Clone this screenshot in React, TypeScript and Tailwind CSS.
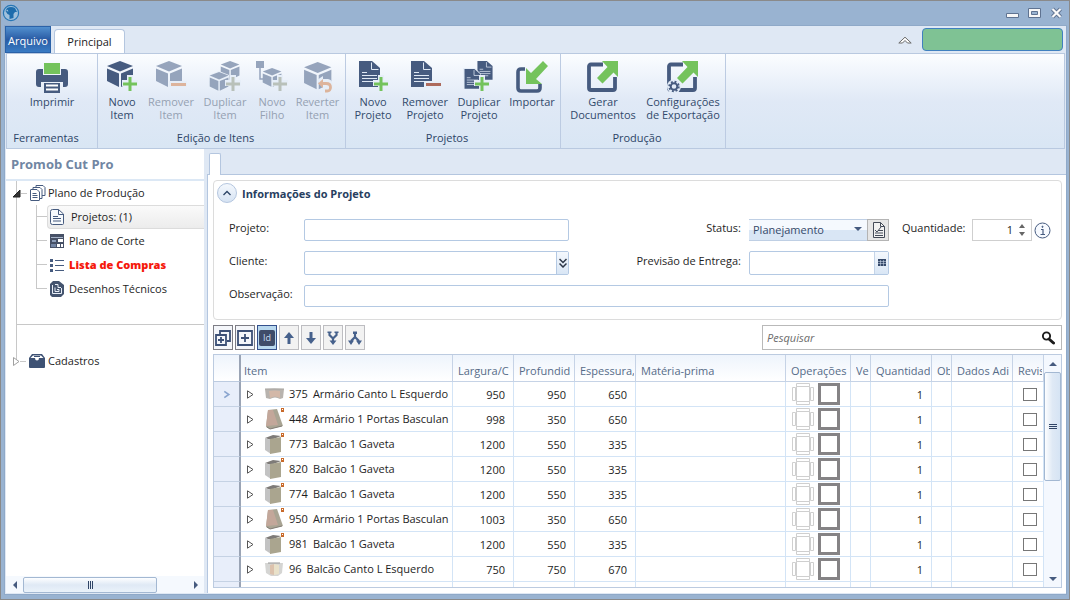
import React from "react";

type IconProps = { className?: string };

const items = [
  { id: "375", name: "Armário Canto L Esquerdo", kind: "wall", w: 950, d: 950, t: 650 },
  { id: "448", name: "Armário 1 Portas Basculan", kind: "tilt", w: 998, d: 350, t: 650 },
  { id: "773", name: "Balcão 1 Gaveta", kind: "box", w: 1200, d: 550, t: 335 },
  { id: "820", name: "Balcão 1 Gaveta", kind: "box", w: 1200, d: 550, t: 335 },
  { id: "774", name: "Balcão 1 Gaveta", kind: "box", w: 1200, d: 550, t: 335 },
  { id: "950", name: "Armário 1 Portas Basculan", kind: "tilt", w: 1003, d: 350, t: 650 },
  { id: "981", name: "Balcão 1 Gaveta", kind: "box", w: 1200, d: 550, t: 335 },
  { id: "96", name: "Balcão Canto L Esquerdo", kind: "corner", w: 750, d: 750, t: 670 },
];

/* ---------- shapes shared by the ribbon icons ---------- */

function Cube({ color = "#465b7f" }: { color?: string }) {
  return (
    <g fill={color}>
      <path d="M14 0 27 5 14 10.500 1 5z" />
      <path d="M1 7.500 13 12.500V26L1 20z" />
      <path d="M15 12.500 27 7.500V20L15 26z" />
    </g>
  );
}

function Plus({ color = "#74c35c" }: { color?: string }) {
  return (
    <g>
      <path d="M21 14h6v5h5v6h-5v6h-6v-6h-5v-6h5z" fill="#e6eef8" />
      <path d="M22.500 16h3v5.500H31v3h-5.500V30h-3v-5.500H17v-3h5.500z" fill={color} />
    </g>
  );
}

function Doc() {
  return (
    <g>
      <path d="M2 0h13l8 7v19H2z" fill="#465b7f" />
      <path d="M14.500 1.500V8.500h7M5 11.500h5M5 14.500h15M5 17.500h15M5 20.500h12" stroke="#dfe8f4" fill="none" />
    </g>
  );
}

function Ribbon32({ children, faded }: { children: React.ReactNode; faded?: boolean }) {
  return (
    <svg viewBox="0 0 32 32" className={faded ? "h-8 w-8 opacity-90" : "h-8 w-8"} aria-hidden="true">
      {children}
    </svg>
  );
}

const PrintIcon = () => (
  <Ribbon32>
    <path d="M8 2h16v11H8z" fill="#74c35c" />
    <path d="M3 8h4v6h18V8h4q3 0 3 3v12q0 3-3 3h-2v-5H5v5H3q-3 0-3-3V11q0-3 3-3z" fill="#465b7f" />
    <path d="M8 22h16v10H8z" fill="#465b7f" />
    <path d="M10 24.500h12M10 28.500h12" stroke="#fff" strokeWidth="1.800" />
  </Ribbon32>
);

const NewItemIcon = () => (
  <Ribbon32>
    <Cube />
    <Plus />
  </Ribbon32>
);

const RemoveItemIcon = () => (
  <Ribbon32 faded>
    <Cube color="#8c9cb6" />
    <path d="M14 20h18v6H14z" fill="#e6eef8" />
    <path d="M16 22h15v3H16z" fill="#dcae92" />
  </Ribbon32>
);

const DuplicateItemIcon = () => (
  <Ribbon32 faded>
    <g transform="translate(11 0) scale(.72)">
      <Cube color="#8c9cb6" />
    </g>
    <g transform="translate(0 11)">
      <path d="M0 3 10-1 20 3V15L10 20 0 15z" fill="#e9f0f9" />
      <g transform="scale(.72)">
        <Cube color="#8c9cb6" />
      </g>
    </g>
    <Plus color="#b4bcb4" />
  </Ribbon32>
);

const NewChildIcon = () => (
  <Ribbon32 faded>
    <path d="M0 0h8v7H0z" fill="#8c9cb6" />
    <path d="M4 7v11h5" stroke="#8c9cb6" strokeWidth="1.500" fill="none" />
    <g transform="translate(6 7) scale(.72)">
      <Cube color="#8c9cb6" />
    </g>
    <Plus color="#b4bcb4" />
  </Ribbon32>
);

const RevertIcon = () => (
  <Ribbon32 faded>
    <g transform="translate(1 1) scale(1.050)">
      <Cube color="#8c9cb6" />
    </g>
    <path d="M15 19l6-4v3h5q5 1 5 7t-5 7h-4v-5h-1z" fill="#e6eef8" />
    <path d="M19 22.500h5q4.500 0 4.500 3.800T25 30h-2" stroke="#dcae92" strokeWidth="2.800" fill="none" />
    <path d="M16 22.500l5-4.500v9z" fill="#dcae92" />
  </Ribbon32>
);

const NewProjectIcon = () => (
  <Ribbon32>
    <Doc />
    <Plus />
  </Ribbon32>
);

const RemoveProjectIcon = () => (
  <Ribbon32>
    <Doc />
    <path d="M15 20h17v7H15z" fill="#e6eef8" />
    <path d="M17 22h15v3H17z" fill="#ad6a5c" />
  </Ribbon32>
);

const DuplicateProjectIcon = () => (
  <Ribbon32>
    <g transform="translate(13 0) scale(.72)">
      <Doc />
    </g>
    <g transform="translate(0 8)">
      <path d="M0-1h12l6 6v16H0z" fill="#e6eef8" />
      <g transform="scale(.76)">
        <Doc />
      </g>
    </g>
    <g transform="translate(-5 0)">
      <Plus />
    </g>
  </Ribbon32>
);

const ImportIcon = () => (
  <Ribbon32>
    <path d="M9 8H5q-3 0-3 3v16q0 3 3 3h16q3 0 3-3v-4" stroke="#465b7f" strokeWidth="3.600" fill="none" />
    <path d="M27 0l5 5-12 13 6 5H10V7l5 5z" fill="#74c35c" />
  </Ribbon32>
);

function ExportShape() {
  return (
    <g>
      <path d="M16 3.500H4q-2 0-2 2V27q0 2 2 2h22q2 0 2-2V16" stroke="#465b7f" strokeWidth="3.800" fill="none" />
      <path d="M15 0h16v16l-4.500-4.500-11 11L10 17l10.500-11z" fill="#74c35c" />
    </g>
  );
}

const GenerateIcon = () => (
  <Ribbon32>
    <ExportShape />
  </Ribbon32>
);

const ExportConfigIcon = () => (
  <Ribbon32>
    <ExportShape />
    <circle cx="7" cy="25.500" r="7" fill="#e3ecf7" />
    <circle cx="7" cy="25.500" r="3.300" stroke="#465b7f" strokeWidth="2" fill="none" />
    <circle cx="7" cy="25.500" r="4.800" stroke="#465b7f" strokeWidth="1.800" strokeDasharray="1.900 1.870" fill="none" />
  </Ribbon32>
);

/* ---------- small icons ---------- */

const AppLogo = () => (
  <svg viewBox="0 0 18 18" className="h-[18px] w-[18px]" aria-hidden="true">
    <circle cx="9" cy="9" r="7.600" fill="#9fc0dc" stroke="#2676b5" strokeWidth="1.200" />
    <path d="M5 4q4-2 8 0l2 4-2 0-1.500 2v4l-4 1 0-4-2-1-2-3z" fill="#1d6cac" />
    <path d="M4 7l1.500-1.500 1 2z" fill="#9fc0dc" />
  </svg>
);

const StackIcon = () => (
  <svg viewBox="0 0 16 16" className="h-4 w-4" fill="#fff" stroke="#465b7f" aria-hidden="true">
    <path d="M6 .500h7l2 2v8H6z" />
    <path d="M3 2.500h7l2 2v9H3z" />
    <path d="M.500 5q0-.500.500-.500h6l2.500 2.500v8q0 .500-.500.500H1q-.500 0-.500-.500z" />
    <path d="M2.500 8.500h4M2.500 10.500h5M2.500 12.500h5" />
  </svg>
);

const PageIcon = ({ className = "h-4 w-4" }: IconProps) => (
  <svg viewBox="0 0 16 16" className={className} fill="none" stroke="#465b7f" aria-hidden="true">
    <path d="M3.500.500h6l5 4.500v9.500q0 1-1 1h-10q-2 0-2-2v-11q0-2 2-2z" fill="#f7fafd" />
    <path d="M9.500.500V5.500h5M4 7.500h5M4 9.500h8M4 12h8" />
  </svg>
);

const CutIcon = () => (
  <svg viewBox="0 0 16 16" className="h-4 w-4" aria-hidden="true">
    <path d="M1 1h14v14H1z" fill="#465066" />
    <path d="M2 4h12v1H2z" fill="#a6b3c9" />
    <path d="M3 7h4v2H3z" fill="#8fa0bb" />
    <path d="M9 6h5v3H9zM8 11h3v3H8zM12 11h2v3h-2z" fill="#fff" />
    <path d="M2 11h5v3H2z" fill="#7385a5" />
  </svg>
);

const ListIcon = () => (
  <svg viewBox="0 0 16 16" className="h-4 w-4" aria-hidden="true">
    <path d="M1 2h3v3H1zM1 7h3v3H1zM1 12h3v3H1z" fill="#465b7f" />
    <path d="M6 3.500h9M6 8.500h9M6 13.500h9" stroke="#465b7f" />
  </svg>
);

const DrawingIcon = () => (
  <svg viewBox="0 0 16 16" className="h-4 w-4" aria-hidden="true">
    <path d="M4 0h6l5 4v9l-3 3H3l-2-2V3z" fill="#44546f" />
    <path d="M3.500 4v8.500h9V7M6 3.500h3v3h3M6 6.500v4h4v-2H8" stroke="#e8eef7" fill="none" />
  </svg>
);

const BoxIcon = () => (
  <svg viewBox="0 0 16 14" className="h-4 w-4" aria-hidden="true">
    <path d="M3 0h10l3 4v9q0 1-1 1H1q-1 0-1-1V4z" fill="#3e5274" />
    <path d="M1.500 4L4 1.500h8L14.500 4H10q0 2.500-2 2.500T6 4z" fill="#fff" />
    <path d="M5 2.500h6" stroke="#3e5274" />
  </svg>
);

function ItemPicture({ kind }: { kind: string }) {
  return (
    <svg viewBox="0 0 22 22" className="h-[22px] w-[22px] shrink-0" aria-hidden="true">
      {kind === "wall" && (
        <g>
          <path d="M1 6q9-1 19 0l-1 9-3 1q-5-3-10 0l-4-1z" fill="#b8b3ae" />
          <path d="M5 8q6-1 11 0v7q-5-3-10 0z" fill="#d3b8a8" />
          <path d="M1 6h19" stroke="#a8a6a2" />
        </g>
      )}
      {kind === "corner" && (
        <g>
          <path d="M1 5h18l-1 10-4 3H7l-5-3z" fill="#d5d5d3" />
          <path d="M6 7l4-1v11l-4-1z" fill="#dcc2ad" />
          <path d="M10 6l5 1v9l-5 1z" fill="#e9e1c9" />
          <path d="M4 5h12" stroke="#969696" />
        </g>
      )}
      {kind === "tilt" && (
        <g>
          <path d="M4 2l9-1 6 17-13 3-4-2z" fill="#a9a493" />
          <path d="M4 2l5 0 5 15-12 1z" fill="#c3a79a" />
          <path d="M3 19l3 2 12-3" stroke="#817c74" fill="none" />
        </g>
      )}
      {kind === "box" && (
        <g>
          <path d="M1 5l8-3 8 1-10 4z" fill="#7e7b78" />
          <path d="M1 5l6 2v14l-6-4z" fill="#c3c3c3" />
          <path d="M6 6l11-2v15L6 21z" fill="#aaa58f" />
        </g>
      )}
      {(kind === "tilt" || kind === "box") && (
        <g>
          <path d="M17 0h3v4h-3z" fill="#c86a2b" />
          <path d="M18 1h1v1h-1z" fill="#fff" />
        </g>
      )}
    </svg>
  );
}

const Triangle = ({ dir, className = "h-2 w-2" }: { dir: "up" | "down" | "left" | "right" } & IconProps) => {
  const d = {
    up: "M0 6 4 2 8 6z",
    down: "M0 2 4 6 8 2z",
    left: "M6 0 2 4 6 8z",
    right: "M2 0 6 4 2 8z",
  }[dir];
  return (
    <svg viewBox="0 0 8 8" className={className} aria-hidden="true">
      <path d={d} fill="#465b7f" />
    </svg>
  );
};

/* ---------- ribbon ---------- */

function RibbonButton({
  icon,
  lines,
  width,
  disabled,
}: {
  icon: React.ReactNode;
  lines: string[];
  width: string;
  disabled?: boolean;
}) {
  return (
    <button
      type="button"
      disabled={disabled}
      className={`flex flex-col items-center gap-[2px] whitespace-nowrap leading-[13px] ${width} ${
        disabled ? "text-[#95a1b2]" : "text-[#324a6b]"
      }`}
    >
      {icon}
      <span>
        {lines.map((line) => (
          <span key={line} className="block">
            {line}
          </span>
        ))}
      </span>
    </button>
  );
}

function RibbonGroup({ title, children }: { title: string; children: React.ReactNode }) {
  return (
    <section className="flex flex-col justify-between border-r border-[#bccbe2] pt-[7px]">
      <div className="flex items-start px-[2px]">{children}</div>
      <h2 className="pr-3 pb-px text-center leading-[18px] text-[#2c4466]">{title}</h2>
    </section>
  );
}

function Ribbon() {
  return (
    <div className="mx-px flex h-24 shrink-0 border border-[#b9c9e0] bg-linear-to-b from-[#fbfdff] via-[#e0e9f6] to-[#d9e6f4]">
      <RibbonGroup title="Ferramentas">
        <RibbonButton icon={<PrintIcon />} lines={["Imprimir"]} width="w-[86px]" />
      </RibbonGroup>
      <RibbonGroup title="Edição de Itens">
        <RibbonButton icon={<NewItemIcon />} lines={["Novo", "Item"]} width="w-11" />
        <RibbonButton icon={<RemoveItemIcon />} lines={["Remover", "Item"]} width="w-[54px]" disabled />
        <RibbonButton icon={<DuplicateItemIcon />} lines={["Duplicar", "Item"]} width="w-[54px]" disabled />
        <RibbonButton icon={<NewChildIcon />} lines={["Novo", "Filho"]} width="w-10" disabled />
        <RibbonButton icon={<RevertIcon />} lines={["Reverter", "Item"]} width="w-[51px]" disabled />
      </RibbonGroup>
      <RibbonGroup title="Projetos">
        <RibbonButton icon={<NewProjectIcon />} lines={["Novo", "Projeto"]} width="w-[50px]" />
        <RibbonButton icon={<RemoveProjectIcon />} lines={["Remover", "Projeto"]} width="w-[54px]" />
        <RibbonButton icon={<DuplicateProjectIcon />} lines={["Duplicar", "Projeto"]} width="w-[54px]" />
        <RibbonButton icon={<ImportIcon />} lines={["Importar"]} width="w-[52px]" />
      </RibbonGroup>
      <RibbonGroup title="Produção">
        <RibbonButton icon={<GenerateIcon />} lines={["Gerar", "Documentos"]} width="w-20" />
        <RibbonButton icon={<ExportConfigIcon />} lines={["Configurações", "de Exportação"]} width="w-20" />
      </RibbonGroup>
    </div>
  );
}

/* ---------- sidebar ---------- */

function TreeItem({
  icon,
  selected,
  last,
  children,
}: {
  icon: React.ReactNode;
  selected?: boolean;
  last?: boolean;
  children: React.ReactNode;
}) {
  return (
    <li className="flex h-6">
      <span className="flex w-[11px] shrink-0 flex-col">
        <span className="h-3 border-b border-l border-[#c8c8c8]" />
        <span className={last ? "h-3" : "h-3 border-l border-[#c8c8c8]"} />
      </span>
      <a
        href="#"
        className={`flex flex-1 items-center whitespace-nowrap border border-r-0 pl-px ${
          selected
            ? "gap-[6px] rounded-l border-[#dcdcdc] bg-linear-to-b from-[#fafafa] to-[#ececec]"
            : "gap-1 border-transparent"
        }`}
      >
        {icon}
        {children}
      </a>
    </li>
  );
}

function Sidebar() {
  return (
    <aside className="flex w-[198px] shrink-0 flex-col bg-white">
      <h1 className="border-b-2 border-[#dce8f5] px-[5px] pt-px text-[13px] font-bold leading-[29px] text-[#7186a3]">
        Promob Cut Pro
      </h1>
      <nav className="flex-1">
        <div className="ml-[10px] h-36 border-b border-l border-[#c8c8c8]">
          <div className="-ml-[5px] flex h-6 items-center">
            <svg viewBox="0 0 9 9" className="h-[9px] w-[9px]" aria-hidden="true">
              <path d="M8 1v7H1z" fill="#333" stroke="#222" />
            </svg>
            <span className="mr-[3px] w-[6px] border-t border-[#c8c8c8]" />
            <a href="#" className="flex items-center gap-[2px]">
              <StackIcon />
              Plano de Produção
            </a>
          </div>
          <ul className="ml-[19px]">
            <TreeItem icon={<PageIcon />} selected>
              Projetos: (1)
            </TreeItem>
            <TreeItem icon={<CutIcon />}>Plano de Corte</TreeItem>
            <TreeItem icon={<ListIcon />}>
              <b className="font-extrabold text-[#f5180c]">Lista de Compras</b>
            </TreeItem>
            <TreeItem icon={<DrawingIcon />} last>
              Desenhos Técnicos
            </TreeItem>
          </ul>
        </div>
        <div className="ml-[10px] h-9 border-l border-[#c8c8c8]" />
        <div className="-mt-3 ml-[7px] flex h-6 items-center">
          <svg viewBox="0 0 7 9" className="h-[9px] w-[7px]" aria-hidden="true">
            <path d="M.500.500 6 4.500.500 8.500z" fill="#fff" stroke="#a0a0a0" />
          </svg>
          <span className="mr-[3px] w-[6px] border-t border-[#c8c8c8]" />
          <a href="#" className="flex items-center gap-[3px]">
            <BoxIcon />
            Cadastros
          </a>
        </div>
      </nav>
      <div className="flex h-[17px] items-center bg-[#f5f9fe]">
        <button type="button" aria-label="Rolar para a esquerda" className="flex w-[17px] justify-center">
          <Triangle dir="left" />
        </button>
        <div className="flex-1">
          <div className="flex h-4 w-[82%] items-center justify-center gap-px rounded-xs border border-[#a3b8d2] bg-linear-to-b from-[#fdfeff] via-[#dfe9f5] to-[#eaf2fa]">
            <span className="h-2 w-px bg-[#2f4466]" />
            <span className="h-2 w-px bg-[#2f4466]" />
            <span className="h-2 w-px bg-[#2f4466]" />
          </div>
        </div>
        <button type="button" aria-label="Rolar para a direita" className="flex w-[17px] justify-center">
          <Triangle dir="right" />
        </button>
      </div>
    </aside>
  );
}

/* ---------- project form ---------- */

const field = "w-full rounded-xs border border-[#b4c9e3] bg-white outline-none";
const fieldLabel = "pb-1 whitespace-nowrap";

function ProjectForm() {
  return (
    <section className="rounded border border-[#dcdcdc] bg-white px-[3px] pt-[2px] pb-3">
      <div className="flex items-center gap-[5px]">
        <button
          type="button"
          aria-label="Recolher"
          className="flex h-5 w-5 items-center justify-center rounded-full border border-[#b4c6df] bg-linear-to-b from-[#f4f8fd] to-[#d6e3f3]"
        >
          <svg viewBox="0 0 8 6" className="h-[6px] w-2" aria-hidden="true">
            <path d="M.500 5 4 1.500 7.500 5" fill="none" stroke="#2c4466" strokeWidth="1.300" />
          </svg>
        </button>
        <h2 className="pt-[2px] font-bold text-[#27405f]">Informações do Projeto</h2>
      </div>
      <div className="mt-4 grid grid-cols-[75px_265px_minmax(0,1fr)_140px_169px] items-center gap-y-[10px] pl-3">
        <label htmlFor="projeto" className={fieldLabel}>Projeto:</label>
        <input id="projeto" className={`h-[22px] px-1 ${field}`} />
        <label htmlFor="status" className={`pr-2 text-right ${fieldLabel}`}>Status:</label>
        <div className="flex h-[22px]">
          <div className="relative flex-1">
            <select
              id="status"
              className="h-[22px] w-full appearance-none border-y border-[#bfcfe4] bg-linear-to-b from-[#f5f9fe] from-50% to-[#d9e6f5] to-50% pl-1 text-[#35496a] outline-none"
            >
              <option>Planejamento</option>
            </select>
            <Triangle dir="down" className="pointer-events-none absolute top-[6px] right-[5px] h-2 w-2" />
          </div>
          <button
            type="button"
            aria-label="Histórico"
            className="flex w-[22px] items-center justify-center border border-[#b4b4b4] bg-[#e6e6e6]"
          >
            <svg viewBox="0 0 13 16" className="h-4 w-[13px]" fill="none" stroke="#444b58" aria-hidden="true">
              <path d="M1.500.500h7l4 4v11h-11z" fill="#f2f2f2" />
              <path d="M8.500.500v4h4M3 8l2 2 4-5M6 8.500h5M3 11h8M3 13.500h8" />
            </svg>
          </button>
        </div>
        <div className="flex items-center pl-[13px]">
          <label htmlFor="quantidade" className={`w-[70px] ${fieldLabel}`}>Quantidade:</label>
          <div className="flex h-[22px] w-[60px] items-center border border-[#cfcfcf] bg-white">
            <input id="quantidade" defaultValue="1" className="min-w-0 flex-1 text-right outline-none" />
            <div className="flex w-[18px] flex-col items-center gap-1">
              <button type="button" aria-label="Aumentar">
                <svg viewBox="0 0 6 4" className="block h-1 w-[6px]"><path d="M0 4 3 0 6 4z" fill="#666" /></svg>
              </button>
              <button type="button" aria-label="Diminuir">
                <svg viewBox="0 0 6 4" className="block h-1 w-[6px]"><path d="M0 0 3 4 6 0z" fill="#666" /></svg>
              </button>
            </div>
          </div>
          <svg viewBox="0 0 17 17" className="ml-[2px] h-[17px] w-[17px]" fill="none" stroke="#465b7f" aria-hidden="true">
            <circle cx="8.500" cy="8.500" r="7.500" fill="#f7faff" />
            <path d="M7 7.500h2v5M6.500 12.500h4.500" strokeWidth="1.200" />
            <circle cx="8.500" cy="4.800" r=".6" fill="#465b7f" />
          </svg>
        </div>

        <label htmlFor="cliente" className={fieldLabel}>Cliente:</label>
        <div className={`flex h-6 pl-1 ${field}`}>
          <input id="cliente" className="min-w-0 flex-1 outline-none" />
          <button
            type="button"
            aria-label="Selecionar cliente"
            className="flex w-3 items-center justify-center border-l border-[#b4c9e3] bg-linear-to-b from-[#f4f8fd] to-[#d9e6f5]"
          >
            <svg viewBox="0 0 8 10" className="h-[10px] w-2" fill="none" stroke="#2b3546" strokeWidth="1.500" aria-hidden="true">
              <path d="M.500 1 4 4.500 7.500 1M.500 5.500 4 9 7.500 5.500" />
            </svg>
          </button>
        </div>
        <label htmlFor="entrega" className={`pr-2 text-right ${fieldLabel}`}>Previsão de Entrega:</label>
        <div className={`flex h-6 pl-1 ${field}`}>
          <input id="entrega" className="min-w-0 flex-1 outline-none" />
          <button
            type="button"
            aria-label="Calendário"
            className="flex w-[14px] items-center justify-center border-l border-[#c4d4e8] bg-linear-to-b from-[#f4f8fd] to-[#d9e6f5]"
          >
            <svg viewBox="0 0 8 8" className="h-2 w-2" aria-hidden="true">
              <path d="M0 0h8v7H0z" fill="#35496a" />
              <path d="M0 2.500h8M0 4.500h8M2.500 1v6M5.500 1v6" stroke="#dbe6f4" strokeWidth=".5" />
            </svg>
          </button>
        </div>
        <span />

        <label htmlFor="observacao" className={fieldLabel}>Observação:</label>
        <input id="observacao" className={`col-span-3 h-[22px] px-1 ${field}`} />
      </div>
    </section>
  );
}

/* ---------- toolbar and grid ---------- */

function ToolButton({ label, tone, children }: { label: string; tone: "dark" | "light"; children: React.ReactNode }) {
  const tones = {
    dark: "border-[#7d7d85] bg-[#f4f6fa]",
    light: "border-[#bdbdc1] bg-[#f2f2f2]",
  };
  return (
    <button type="button" aria-label={label} className={`flex h-[25px] w-5 items-center justify-center border ${tones[tone]}`}>
      <svg viewBox="0 0 16 16" className="h-4 w-4 shrink-0" fill="none" stroke="#3c5076" strokeWidth="2" aria-hidden="true">
        {children}
      </svg>
    </button>
  );
}

function Toolbar() {
  return (
    <div className="mt-[5px] flex items-center gap-[2px]">
      <ToolButton label="Expandir tudo" tone="dark">
        <path d="M5 4V1h10v10h-3" strokeWidth="1.800" />
        <path d="M1 5h10v10H1z" strokeWidth="1.800" />
        <path d="M6 7v6M3 10h6" strokeWidth="1.800" />
      </ToolButton>
      <ToolButton label="Expandir" tone="dark">
        <path d="M1 1h14v14H1zM8 4v8M4 8h8" strokeWidth="1.800" />
      </ToolButton>
      <button
        type="button"
        className="flex h-[25px] w-5 items-center justify-center border border-[#34508c] bg-[#b9d8ee]"
      >
        <span className="w-4 rounded-xs bg-[#3f4c69] text-center text-[9px] leading-4 text-[#c9dcf0]">Id</span>
      </button>
      <ToolButton label="Mover para cima" tone="light">
        <path d="M8 14V6" stroke="#46618c" strokeWidth="3" />
        <path d="M3 8 8 2l5 6z" fill="#46618c" stroke="none" />
      </ToolButton>
      <ToolButton label="Mover para baixo" tone="light">
        <path d="M8 2v8" stroke="#46618c" strokeWidth="3" />
        <path d="M3 8l5 6 5-6z" fill="#46618c" stroke="none" />
      </ToolButton>
      <ToolButton label="Agrupar" tone="light">
        <path d="M4.500 2v3L8 8.500 11.500 5V2M8 8v4" stroke="#46618c" strokeWidth="2.200" />
        <path d="M4.500 10.500h7L8 15zM2.500 1.500h4v1.500h-4zM9.500 1.500h4v1.500h-4z" fill="#46618c" stroke="none" />
      </ToolButton>
      <ToolButton label="Separar" tone="light">
        <path d="M8 2v5l-4 4M8 7l4 4" stroke="#46618c" strokeWidth="2.200" />
        <path d="M1 10.500h6L4 15zM9 10.500h6L12 15zM6 1.500h4V4H6z" fill="#46618c" stroke="none" />
      </ToolButton>
      <div className="ml-auto flex h-[25px] w-[300px] items-center border border-[#b9b9b9] bg-white pr-[6px] pl-1">
        <input
          aria-label="Pesquisar"
          placeholder="Pesquisar"
          className="min-w-0 flex-1 italic outline-none placeholder:text-[#6b6b6b]"
        />
        <svg viewBox="0 0 14 14" className="h-[14px] w-[14px]" fill="none" stroke="#1c1c1c" aria-hidden="true">
          <circle cx="5.500" cy="5" r="3.600" strokeWidth="1.900" />
          <path d="M8 8l4.500 4" strokeWidth="3" strokeLinecap="round" />
        </svg>
      </div>
    </div>
  );
}

const cell = "overflow-hidden border-r border-b border-[#d3e4f6] p-0";
const numberCell = `${cell} pt-[2px] pr-2 text-right`;

function ItemRow({ item, current }: { item: (typeof items)[number]; current?: boolean }) {
  return (
    <tr className="h-[25px]">
      <td className="border-r-2 border-b border-r-[#9aa4b5] border-b-[#c5d2e4] bg-[#e8eefa] p-0">
        {current && (
          <svg viewBox="0 0 8 10" className="mx-auto h-[9px] w-2" fill="none" stroke="#8aa5cf" strokeWidth="1.800" aria-hidden="true">
            <path d="M1 1.500 6 5 1 8.500" />
          </svg>
        )}
      </td>
      <td className={cell}>
        <div className="flex items-center whitespace-nowrap pl-[6px]">
          <svg viewBox="0 0 7 9" className="mr-[10px] h-[9px] w-[7px] shrink-0" aria-hidden="true">
            <path d="M.500.800 6 4.500.500 8.200z" fill="#fff" stroke="#555" />
          </svg>
          <ItemPicture kind={item.kind} />
          <span className="ml-[3px]">{item.id}</span>
          <span className="ml-[5px]">{item.name}</span>
        </div>
      </td>
      <td className={numberCell}>{item.w}</td>
      <td className={numberCell}>{item.d}</td>
      <td className={numberCell}>{item.t}</td>
      <td className={cell} />
      <td className={cell}>
        <div className="flex gap-1 pl-[6px]">
          <svg viewBox="0 0 22 22" className="h-[22px] w-[22px]" fill="#fff" stroke="#cfcfcf" aria-hidden="true">
            <path d="M4.500 3.500h13v15h-13zM4.500.500h13v3h-13zM4.500 18.500h13v3h-13zM.500 4.500h3v13h-3zM18.500 4.500h3v13h-3z" />
          </svg>
          <span className="h-[22px] w-[22px] border-3 border-[#858385] bg-white" />
        </div>
      </td>
      <td className={cell} />
      <td className={numberCell}>1</td>
      <td className={cell} />
      <td className={cell} />
      <td className={cell}>
        <input
          type="checkbox"
          aria-label={`Revisado ${item.id}`}
          className="ml-[10px] block h-[13px] w-[14px] appearance-none border border-[#777] bg-white"
        />
      </td>
    </tr>
  );
}

const headings = [
  "Item",
  "Largura/C",
  "Profundid",
  "Espessura,",
  "Matéria-prima",
  "Operações",
  "Ve",
  "Quantidad",
  "Ob",
  "Dados Adi",
  "Revis",
];

function ItemGrid() {
  return (
    <div className="mt-1 flex min-h-0 flex-1 border border-[#bccbe0]">
      <div className="min-w-0 flex-1 overflow-hidden">
        <table className="w-full table-fixed border-separate border-spacing-0">
          <colgroup>
            <col className="w-[27px]" />
            <col className="w-[212px]" />
            <col className="w-[61px]" />
            <col className="w-[61px]" />
            <col className="w-[61px]" />
            <col />
            <col className="w-[65px]" />
            <col className="w-5" />
            <col className="w-[61px]" />
            <col className="w-5" />
            <col className="w-[61px]" />
            <col className="w-[31px]" />
          </colgroup>
          <thead>
            <tr className="h-[27px] text-left text-[#566b88]">
              <th className="border-r-2 border-b border-r-[#9aa4b5] border-b-[#bccbe0] bg-linear-to-b from-[#eef4fc] to-white p-0" />
              {headings.map((title, i) => (
                <th
                  key={title}
                  className={`border-r border-b border-[#c6d3e6] bg-linear-to-b from-[#eef4fc] to-white p-0 pt-[6px] font-normal ${
                    i === 0 ? "pl-[3px]" : "pr-px pl-[5px]"
                  }`}
                >
                  <div className="overflow-hidden whitespace-nowrap">{title}</div>
                </th>
              ))}
            </tr>
          </thead>
          <tbody>
            {items.map((item, i) => (
              <ItemRow key={item.id} item={item} current={i === 0} />
            ))}
            <tr className="h-[25px]">
              <td className="border-r-2 border-r-[#9aa4b5] bg-[#e8eefa] p-0" />
              {headings.map((title) => (
                <td key={title} className={cell} />
              ))}
            </tr>
          </tbody>
        </table>
      </div>
      <div className="flex w-[17px] shrink-0 flex-col items-center bg-[#f4f8fe]">
        <button type="button" aria-label="Rolar para cima" className="flex h-[17px] items-center">
          <Triangle dir="up" />
        </button>
        <div className="w-full flex-1">
          <div className="flex h-[55%] w-full flex-col items-center justify-center gap-px rounded-xs border border-[#a3b8d2] bg-linear-to-r from-[#fdfeff] via-[#dfe9f5] to-[#d6e4f4]">
            <span className="h-px w-2 bg-[#2f4466]" />
            <span className="h-px w-2 bg-[#2f4466]" />
            <span className="h-px w-2 bg-[#2f4466]" />
          </div>
        </div>
        <button type="button" aria-label="Rolar para baixo" className="flex h-[17px] items-center">
          <Triangle dir="down" />
        </button>
      </div>
    </div>
  );
}

/* ---------- window ---------- */

function TitleBar() {
  return (
    <header className="flex h-6 shrink-0 items-center justify-between bg-[#99b3d1] px-px">
      <AppLogo />
      <div className="flex items-center gap-[9px] pr-[5px]">
        <button type="button" aria-label="Minimizar">
          <svg viewBox="0 0 13 12" className="block h-3 w-[13px]">
            <path d="M.500 6.500h12v4H.500z" fill="#f7f7f7" stroke="#5f7391" />
          </svg>
        </button>
        <button type="button" aria-label="Restaurar">
          <svg viewBox="0 0 13 12" className="block h-3 w-[13px]">
            <path d="M.500 1.500h12v9H.500z" fill="#f7f7f7" stroke="#5f7391" />
            <path d="M3.500 4.500h6v3h-6z" fill="#99b3d1" stroke="#5f7391" />
          </svg>
        </button>
        <button type="button" aria-label="Fechar">
          <svg viewBox="0 0 13 12" className="block h-3 w-[13px]">
            <path d="M2.500 2l8 8M10.500 2l-8 8" stroke="#5f7391" strokeWidth="4" />
            <path d="M2.500 2l8 8M10.500 2l-8 8" stroke="#fafafa" strokeWidth="2.200" />
          </svg>
        </button>
      </div>
    </header>
  );
}

function TabStrip() {
  return (
    <div className="flex h-[27px] shrink-0 items-end">
      <button
        type="button"
        className="h-[27px] w-[46px] border border-[#2b62a8] bg-linear-to-b from-[#5290cf] via-[#2a5ba4] to-[#3a7cc4] pt-[2px] text-center text-white"
      >
        Arquivo
      </button>
      <button
        type="button"
        className="ml-[3px] h-6 w-[71px] rounded-t border border-b-0 border-[#b4c6df] bg-white text-[#222]"
      >
        Principal
      </button>
      <div className="ml-auto flex items-center gap-[10px] self-center pr-[3px]">
        <button type="button" aria-label="Recolher faixa">
          <svg viewBox="0 0 14 8" className="block h-2 w-[14px]" aria-hidden="true">
            <path d="M.800 7 7 1.200 13.200 7H9.500L7 4.500 4.500 7z" fill="#fff" stroke="#6a6a6a" />
          </svg>
        </button>
        <button type="button" aria-label="Conta" className="h-[23px] w-[141px] rounded border border-[#4080c0] bg-[#7fc294]" />
      </div>
    </div>
  );
}

export default function App() {
  return (
    <div className="flex h-screen flex-col overflow-hidden border border-[#8a8a8a] bg-[#99b3d1] font-['Open_Sans','Noto_Sans',sans-serif] text-[11px] leading-4 text-[#1e1e1e]">
      <TitleBar />
      <div className="mr-[2px] mb-1 ml-[3px] flex min-h-0 flex-1 flex-col border border-[#8fa9c8] bg-[#dfe8f4]">
        <TabStrip />
        <Ribbon />
        <div className="flex min-h-0 flex-1 pb-px pl-px">
          <Sidebar />
          <main className="ml-[3px] flex min-w-0 flex-1 flex-col">
            <div className="flex h-[26px] shrink-0 items-end">
              <span className="h-full w-[2px] border-b border-[#b4c6df]" />
              <span className="h-[22px] w-3 rounded-t-xs border border-b-0 border-[#b4c6df] bg-white" />
              <span className="h-full flex-1 border-b border-[#b4c6df]" />
            </div>
            <div className="flex min-h-0 flex-1 flex-col border-l border-[#b4c6df] bg-white pt-[5px] pr-1 pb-[5px] pl-[5px]">
              <ProjectForm />
              <Toolbar />
              <ItemGrid />
            </div>
          </main>
        </div>
      </div>
    </div>
  );
}
